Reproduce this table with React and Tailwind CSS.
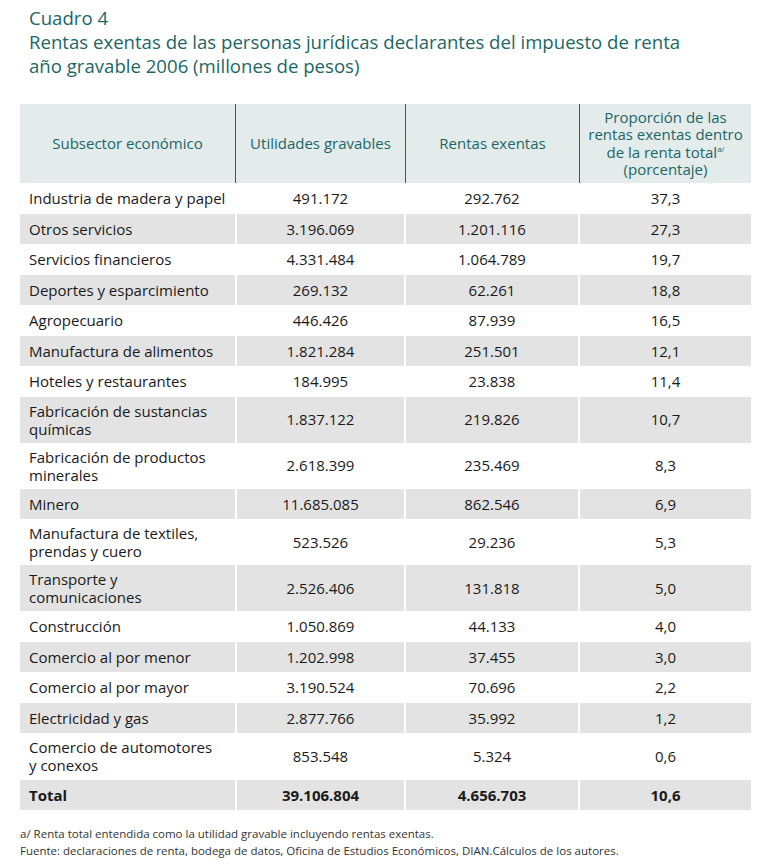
import React from 'react';

const rows = [
  ['Industria de madera y papel', '491.172', '292.762', '37,3'],
  ['Otros servicios', '3.196.069', '1.201.116', '27,3'],
  ['Servicios financieros', '4.331.484', '1.064.789', '19,7'],
  ['Deportes y esparcimiento', '269.132', '62.261', '18,8'],
  ['Agropecuario', '446.426', '87.939', '16,5'],
  ['Manufactura de alimentos', '1.821.284', '251.501', '12,1'],
  ['Hoteles y restaurantes', '184.995', '23.838', '11,4'],
  [['Fabricación de sustancias', 'químicas'], '1.837.122', '219.826', '10,7'],
  [['Fabricación de productos', 'minerales'], '2.618.399', '235.469', '8,3'],
  ['Minero', '11.685.085', '862.546', '6,9'],
  [['Manufactura de textiles,', 'prendas y cuero'], '523.526', '29.236', '5,3'],
  [['Transporte y', 'comunicaciones'], '2.526.406', '131.818', '5,0'],
  ['Construcción', '1.050.869', '44.133', '4,0'],
  ['Comercio al por menor', '1.202.998', '37.455', '3,0'],
  ['Comercio al por mayor', '3.190.524', '70.696', '2,2'],
  ['Electricidad y gas', '2.877.766', '35.992', '1,2'],
  [['Comercio de automotores', 'y conexos'], '853.548', '5.324', '0,6'],
];

const cols = 'grid grid-cols-[215px_167px_172px_171px] gap-x-[2px]';

const App = () => {
  return (
    <div
      className="w-[773px] h-[864px] bg-white pt-[6px] text-[#1a1a1a]"
      style={{ fontFamily: '"Open Sans", "Noto Sans", sans-serif' }}
    >
      {/* Title */}
      <div className="pl-[29px] text-[#1b6767] text-[18.6px] leading-[24px]">
        <div>Cuadro 4</div>
        <div>Rentas exentas de las personas jurídicas declarantes del impuesto de renta</div>
        <div>año gravable 2006 (millones de pesos)</div>
      </div>

      {/* Table */}
      <div className="ml-[20px] mt-[26px] w-[731px] text-[15px]">
        <div className="grid grid-cols-[216px_170px_174px_171px] h-[79px] bg-[#e3ebeb] text-[#1b6767] text-center leading-[17.5px]">
          <div className="flex items-center justify-center border-r border-[#1b6767]">Subsector económico</div>
          <div className="flex items-center justify-center border-r border-[#1b6767]">Utilidades gravables</div>
          <div className="flex items-center justify-center border-r border-[#1b6767]">Rentas exentas</div>
          <div className="flex flex-col items-center justify-center">
            <div>Proporción de las</div>
            <div>rentas exentas dentro</div>
            <div>
              de la renta total<span className="text-[8px] leading-none align-top relative top-[1px]">a/</span>
            </div>
            <div>(porcentaje)</div>
          </div>
        </div>

        {rows.map(([name, util, rentas, prop], i) => {
          const bg = i % 2 === 1 ? 'bg-[#e3e3e3]' : 'bg-white';
          const tall = Array.isArray(name);
          return (
            <div key={i} className={`${cols} ${tall ? 'h-[46px]' : 'h-[30.5px]'}`}>
              <div className={`${bg} flex flex-col justify-center pl-[9px] leading-[18px]`}>
                {tall ? name.map((l) => <div key={l}>{l}</div>) : name}
              </div>
              <div className={`${bg} flex items-center justify-center`}>{util}</div>
              <div className={`${bg} flex items-center justify-center`}>{rentas}</div>
              <div className={`${bg} flex items-center justify-center`}>{prop}</div>
            </div>
          );
        })}

        <div className={`${cols} h-[30px] mt-[1px] font-bold`}>
          <div className="bg-[#e3e3e3] flex items-center pl-[9px]">Total</div>
          <div className="bg-[#e3e3e3] flex items-center justify-center">39.106.804</div>
          <div className="bg-[#e3e3e3] flex items-center justify-center">4.656.703</div>
          <div className="bg-[#e3e3e3] flex items-center justify-center">10,6</div>
        </div>
      </div>

      {/* Notes */}
      <div className="ml-[20px] mt-[15px] text-[11.5px] leading-[17px] text-[#333]">
        <div>a/ Renta total entendida como la utilidad gravable incluyendo rentas exentas.</div>
        <div>Fuente: declaraciones de renta, bodega de datos, Oficina de Estudios Económicos, DIAN.Cálculos de los autores.</div>
      </div>
    </div>
  );
};

export default App;
